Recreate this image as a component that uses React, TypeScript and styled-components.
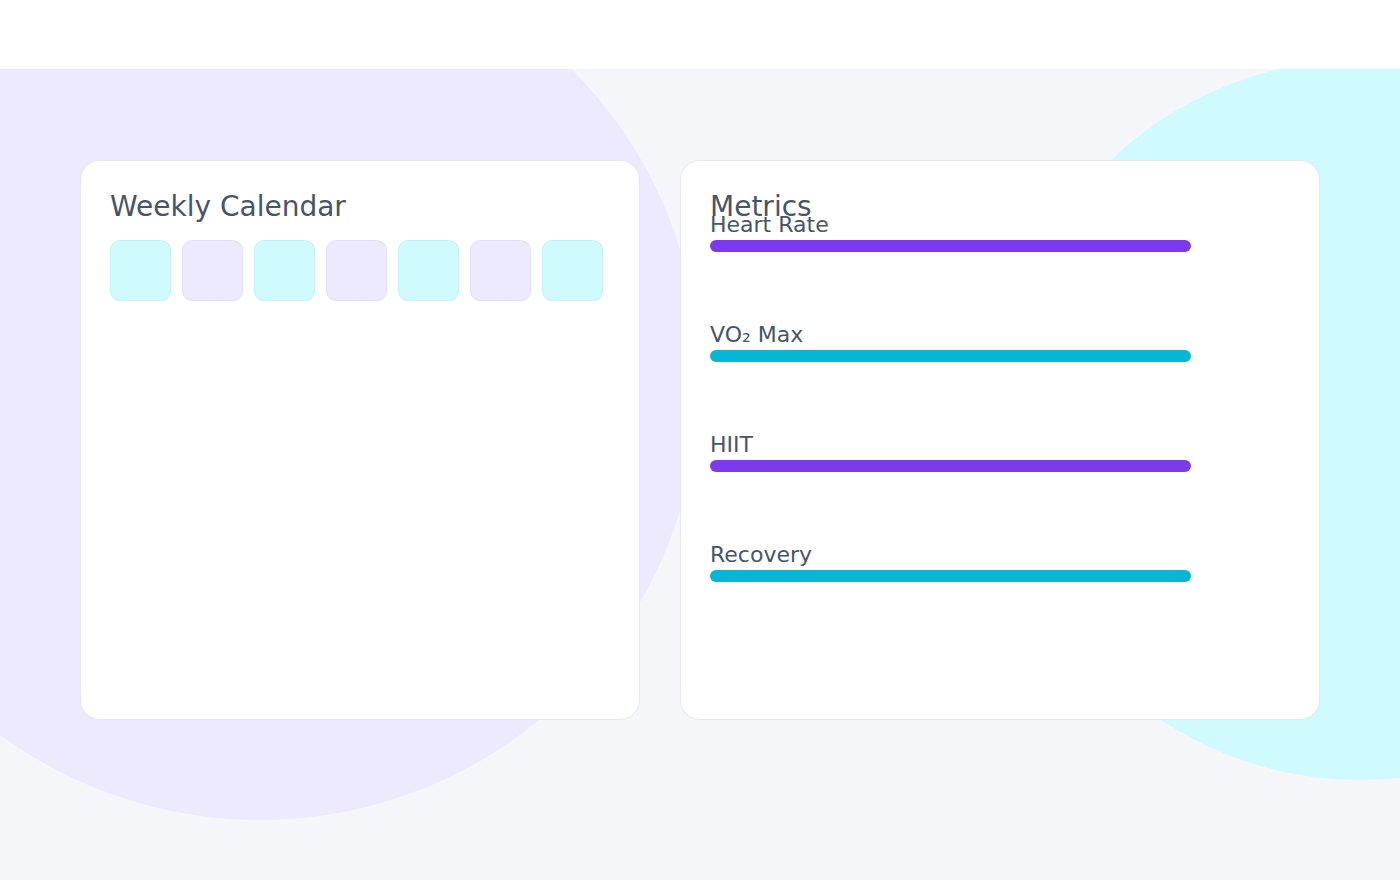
import React from "react";
import styled, { createGlobalStyle } from "styled-components";

const Global = createGlobalStyle`
  html, body { margin: 0; padding: 0; }
  body {
    background: #f5f6fa;
    font-family: "DejaVu Sans", "Liberation Sans", sans-serif;
    overflow: hidden;
  }
  * { box-sizing: border-box; }
`;

const Page = styled.div`
  position: relative;
  width: 1400px;
  height: 880px;
  overflow: hidden;
  background: #f5f6fa;
`;

const Blob = styled.div<{ $color: string; $size: number; $x: number; $y: number }>`
  position: absolute;
  width: ${(p) => p.$size}px;
  height: ${(p) => p.$size}px;
  left: ${(p) => p.$x}px;
  top: ${(p) => p.$y}px;
  border-radius: 50%;
  background: ${(p) => p.$color};
  z-index: 0;
`;

const Header = styled.header`
  position: relative;
  z-index: 2;
  height: 69px;
  background: #ffffff;
`;

const Main = styled.main`
  position: relative;
  z-index: 1;
  display: grid;
  grid-template-columns: 7fr 8fr;
  gap: 40px;
  padding: 91px 80px 0;
`;

const Card = styled.section`
  height: 560px;
  background: #ffffff;
  border: 1px solid #e5e7eb;
  border-radius: 20px;
  padding: 29px;
`;

const Title = styled.h2<{ $overlap?: boolean }>`
  margin: 0 0 ${(p) => (p.$overlap ? "-11px" : "17px")};
  font-size: 28px;
  line-height: 33px;
  font-weight: 400;
  color: #475569;
  position: relative;
`;

const Days = styled.div`
  display: flex;
  gap: 11px;
`;

const Day = styled.div<{ $alt: boolean }>`
  width: 61px;
  height: 61px;
  border-radius: 10px;
  background: ${(p) => (p.$alt ? "#ede9fe" : "#cffafe")};
  border: 1px solid ${(p) => (p.$alt ? "#e4e0fb" : "#c2f1f6")};
`;

const MetricList = styled.div`
  display: flex;
  flex-direction: column;
  gap: 70px;
`;

const Metric = styled.div`
  display: flex;
  flex-direction: column;
  gap: 2px;
`;

const Label = styled.span`
  font-size: 22px;
  line-height: 26px;
  color: #475569;
`;

const Bar = styled.div<{ $color: string }>`
  width: 481px;
  height: 12px;
  border-radius: 6px;
  background: ${(p) => p.$color};
`;

const metrics = [
  { name: "Heart Rate", color: "#7c3aed" },
  { name: "VO₂ Max", color: "#06b6d4" },
  { name: "HIIT", color: "#7c3aed" },
  { name: "Recovery", color: "#06b6d4" },
];

export default function App() {
  return (
    <Page>
      <Global />
      <Blob $color="#ede9fe" $size={880} $x={-180} $y={-60} />
      <Blob $color="#cffafe" $size={720} $x={1000} $y={60} />
      <Header />
      <Main>
        <Card>
          <Title>Weekly Calendar</Title>
          <Days>
            {Array.from({ length: 7 }).map((_, i) => (
              <Day key={i} $alt={i % 2 === 1} />
            ))}
          </Days>
        </Card>
        <Card>
          <Title $overlap>Metrics</Title>
          <MetricList>
            {metrics.map((m) => (
              <Metric key={m.name}>
                <Label>{m.name}</Label>
                <Bar $color={m.color} />
              </Metric>
            ))}
          </MetricList>
        </Card>
      </Main>
    </Page>
  );
}
